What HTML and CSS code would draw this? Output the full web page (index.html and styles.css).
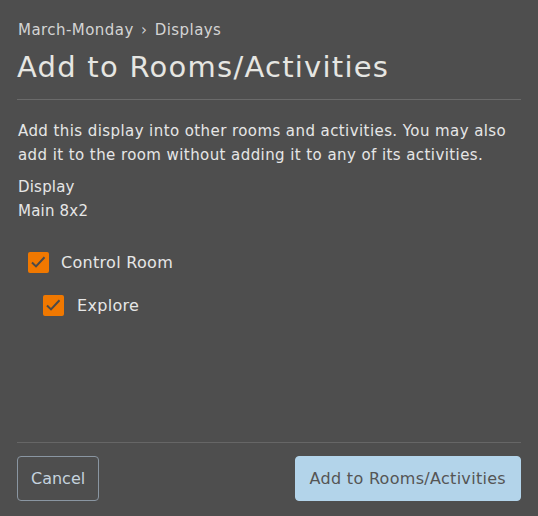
FILE: index.html
```html
<!DOCTYPE html>
<html lang="en">
<head>
    <meta charset="UTF-8">
    <title>Add to Rooms/Activities</title>
    <link rel="stylesheet" href="styles.css">
</head>
<body>
    <div class="modal">
        <div class="header">
            <div class="crumbs">March-Monday <span class="sep">›</span> Displays</div>
            <h1 class="title">Add to Rooms/Activities</h1>
        </div>
        <div class="body">
            <p class="intro">Add this display into other rooms and activities. You may also add it to the room without adding it to any of its activities.</p>
            <div class="field">
                <div class="label">Display</div>
                <div class="value">Main 8x2</div>
            </div>
            <ul class="tree">
                <li class="item">
                    <span class="check"><svg viewBox="0 0 21 21" width="21" height="21"><path d="M4 10.5l4 3.9 8.5-9.2" fill="none" stroke="#4a4a4a" stroke-width="2"/></svg></span>
                    <span>Control Room</span>
                </li>
                <li class="item sub">
                    <span class="check"><svg viewBox="0 0 21 21" width="21" height="21"><path d="M4 10.5l4 3.9 8.5-9.2" fill="none" stroke="#4a4a4a" stroke-width="2"/></svg></span>
                    <span>Explore</span>
                </li>
            </ul>
        </div>
        <div class="footer">
            <button class="btn btn-cancel">Cancel</button>
            <button class="btn btn-primary">Add to Rooms/Activities</button>
        </div>
    </div>
</body>
</html>
```

FILE: styles.css
```css
html, body { height: 100%; }
body {
    margin: 0;
    background: #4e4e4e;
    color: #e6e6e6;
    font-family: "DejaVu Sans", "Open Sans", sans-serif;
}
.modal {
    height: 516px;
    display: flex;
    flex-direction: column;
    padding: 0 17px 0 17px;
    box-sizing: border-box;
}
.header {
    padding-top: 19px;
    border-bottom: 1px solid #6a6a6a;
}
.crumbs {
    font-size: 15px;
    line-height: 22px;
    color: #d4d4d4;
    padding-left: 1px;
    letter-spacing: 0.45px;
}
.sep { padding: 0 2px; }
.title {
    margin: 6px 0 0 0;
    font-weight: 400;
    font-size: 29px;
    line-height: 40px;
    padding-bottom: 12px;
    color: #e6e6e2;
    letter-spacing: 1.25px;
}
.body { flex: 1; padding-top: 19px; padding-left: 1px; }
.intro {
    margin: 0;
    font-size: 15px;
    line-height: 24px;
    letter-spacing: 0.42px;
}
.field {
    margin-top: 8px;
    font-size: 15px;
    line-height: 24px;
    letter-spacing: 0.2px;
}
.tree {
    list-style: none;
    margin: 28px 0 0 0;
    padding: 0 0 0 10px;
}
.item {
    display: flex;
    align-items: center;
    gap: 12px;
    font-size: 16px;
    height: 22px;
    margin-bottom: 21px;
    letter-spacing: 0.3px;
}
.item.sub { padding-left: 15px; gap: 13px; }
.check {
    width: 21px;
    height: 21px;
    background: #f07800;
    border-radius: 2px;
    display: block;
}
.check svg { display: block; }
.footer {
    border-top: 1px solid #666;
    padding: 13px 0 15px;
    display: flex;
    justify-content: space-between;
}
.btn {
    height: 45px;
    font-family: inherit;
    font-size: 16px;
    border-radius: 4px;
    padding: 0 14px;
    cursor: pointer;
}
.btn-cancel {
    background: transparent;
    border: 1px solid #8a96a2;
    color: #c5d3df;
    padding: 0 13px;
}
.btn-primary {
    background: #b3d4ea;
    border: 1px solid #b3d4ea;
    color: #555;
    letter-spacing: 0.3px;
}
```
